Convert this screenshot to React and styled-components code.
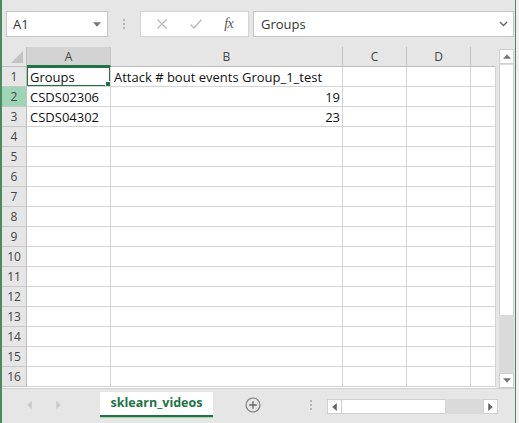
import React from "react";
import styled, { createGlobalStyle } from "styled-components";

const Global = createGlobalStyle`
  html, body { margin: 0; padding: 0; overflow: hidden; background: #e6e6e6; }
  * { box-sizing: border-box; }
`;

const FONT = `"Open Sans", "Noto Sans", sans-serif`;

const Window = styled.div`
  width: 519px;
  height: 423px;
  display: flex;
  flex-direction: column;
  background: #e6e6e6;
  border-left: 2px solid #4a8a5e;
  border-right: 3px solid #f0f0f0;
  position: relative;
  font-family: ${FONT};
  overflow: hidden;
  &::after {
    content: "";
    position: absolute;
    top: 0;
    bottom: 0;
    right: 0;
    width: 1px;
    background: #4a8a5e;
  }
`;

const FormulaBar = styled.div`
  height: 47px;
  display: flex;
  align-items: flex-start;
  padding: 11px 0 0 4px;
  flex: none;
`;

const NameBox = styled.div`
  width: 102px;
  height: 26px;
  background: #fff;
  border: 1px solid #c6c6c6;
  display: flex;
  align-items: center;
  justify-content: space-between;
  padding: 0 6px 0 6px;
  font-size: 13px;
  color: #333;
`;

const Dots = styled.div`
  width: 32px;
  height: 26px;
  display: flex;
  flex-direction: column;
  align-items: center;
  justify-content: center;
  gap: 2px;
  span {
    width: 2px;
    height: 2px;
    background: #b5b5b5;
  }
`;

const FxBox = styled.div`
  width: 109px;
  height: 26px;
  background: #fff;
  border: 1px solid #d4d4d4;
  display: flex;
  align-items: center;
  justify-content: space-around;
  padding: 0 4px;
  margin-right: 4px;
`;

const FxText = styled.span`
  font-family: "Liberation Serif", serif;
  font-style: italic;
  font-size: 14px;
  color: #555;
  letter-spacing: -0.5px;
`;

const FormulaInput = styled.div`
  width: 261px;
  height: 26px;
  background: #fff;
  border: 1px solid #c6c6c6;
  display: flex;
  align-items: center;
  justify-content: space-between;
  padding: 0 5px 0 7px;
  font-size: 13px;
  color: #333;
`;

const Main = styled.div`
  display: flex;
  height: 341px;
  flex: none;
`;

const Sheet = styled.div`
  width: 494px;
  display: grid;
  grid-template-columns: 25px 84px 232px 64px 64px 25px;
  grid-auto-rows: 20px;
  background: #fff;
  align-content: start;
  overflow: hidden;
`;

const Corner = styled.div`
  background: #e6e6e6;
  border-right: 1px solid #bdbdbd;
  border-bottom: 1px solid #bdbdbd;
  position: relative;
  &::after {
    content: "";
    position: absolute;
    right: 3px;
    bottom: 3px;
    width: 0;
    height: 0;
    border-left: 12px solid transparent;
    border-bottom: 12px solid #c3c3c3;
  }
`;

const ColHead = styled.div`
  background: ${(p) => (p.$active ? "#d3d3d3" : "#e6e6e6")};
  border-right: 1px solid ${(p) => (p.$last ? "transparent" : "#c4c4c4")};
  border-bottom: ${(p) => (p.$active ? "2px solid #217346" : "1px solid #bdbdbd")};
  display: flex;
  align-items: center;
  justify-content: center;
  font-size: 12px;
  color: #444;
  padding-top: ${(p) => (p.$active ? "1px" : "0")};
`;

const RowHead = styled.div`
  background: ${(p) => (p.$hover ? "#9fd5b7" : "#e6e6e6")};
  border-right: 1px solid #bdbdbd;
  border-bottom: 1px solid #c8c8c8;
  display: flex;
  align-items: center;
  justify-content: center;
  font-size: 12px;
  color: #444;
`;

const Cell = styled.div`
  border-right: 1px solid #d4d4d4;
  border-bottom: 1px solid #d4d4d4;
  display: flex;
  align-items: center;
  justify-content: ${(p) => (p.$num ? "flex-end" : "flex-start")};
  padding: 0 2px 0 3px;
  font-size: 13px;
  color: #111;
  white-space: nowrap;
  overflow: ${(p) => (p.$spill ? "visible" : "hidden")};
  position: relative;
  z-index: ${(p) => (p.$spill ? 1 : 0)};
`;

const Selection = styled.div`
  position: absolute;
  left: -1px;
  top: -1px;
  right: -1px;
  bottom: -1px;
  border: 2px solid #217346;
  pointer-events: none;
  z-index: 2;
  &::after {
    content: "";
    position: absolute;
    right: -4px;
    bottom: -4px;
    width: 6px;
    height: 6px;
    background: #217346;
    border: 1px solid #fff;
  }
`;

const VScroll = styled.div`
  width: 20px;
  display: flex;
  flex-direction: column;
  padding: 2px 2px 0 3px;
  background: #e6e6e6;
`;

const VTrack = styled.div`
  flex: 1;
  display: flex;
  flex-direction: column;
  background: #dadada;
`;

const ArrowBtn = styled.div`
  width: 15px;
  height: 15px;
  background: #fff;
  border: 1px solid #d0d0d0;
  display: flex;
  align-items: center;
  justify-content: center;
  flex: none;
`;

const VThumb = styled.div`
  height: 250px;
  background: #fff;
  border-left: 1px solid #d0d0d0;
  border-right: 1px solid #d0d0d0;
  margin-top: 1px;
`;

const Spacer = styled.div`
  flex: 1;
`;

const BottomBar = styled.div`
  flex: 1;
  display: flex;
  align-items: flex-start;
  background: #e6e6e6;
  border-top: 1px solid #d0d0d0;
  padding-top: 3px;
`;

const NavArea = styled.div`
  width: 98px;
  height: 26px;
  display: flex;
  align-items: center;
  padding-left: 24px;
  gap: 22px;
`;

const Tab = styled.div`
  width: 113px;
  height: 25px;
  background: #fff;
  border-bottom: 2px solid #217346;
  box-shadow: 0 1px 0 #a9d2b7;
  display: flex;
  align-items: center;
  justify-content: center;
  font-weight: 700;
  font-size: 12.5px;
  color: #217346;
  padding-bottom: 2px;
`;

const AddBtn = styled.div`
  width: 80px;
  height: 26px;
  display: flex;
  align-items: center;
  justify-content: center;
`;

const SmallDots = styled(Dots)`
  width: 14px;
  height: 26px;
  margin-left: 11px;
`;

const HScroll = styled.div`
  margin-left: 9px;
  margin-top: 7px;
  width: 171px;
  height: 15px;
  display: flex;
  background: #dadada;
`;

const HThumb = styled.div`
  width: 103px;
  background: #fff;
  border-top: 1px solid #d0d0d0;
  border-bottom: 1px solid #d0d0d0;
`;

const Tri = ({ dir, color = "#777", size = 7 }) => {
  const pts = {
    up: "0,5 7,5 3.5,1",
    down: "0,1 7,1 3.5,5",
    left: "5,0 5,7 1,3.5",
    right: "1,0 1,7 5,3.5",
  }[dir];
  const horiz = dir === "left" || dir === "right";
  const vb = horiz ? "0 0 6 7" : "0 0 7 6";
  return (
    <svg width={horiz ? size - 1 : size} height={horiz ? size : size - 1} viewBox={vb}>
      <polygon points={pts} fill={color} />
    </svg>
  );
};

const cols = ["A", "B", "C", "D", ""];
const data = {
  1: ["Groups", "Attack # bout events Group_1_test", "", "", ""],
  2: ["CSDS02306", "19", "", "", ""],
  3: ["CSDS04302", "23", "", "", ""],
};

export default function App() {
  const rows = Array.from({ length: 16 }, (_, i) => i + 1);
  return (
    <>
      <Global />
      <Window>
        <FormulaBar>
          <NameBox>
            <span>A1</span>
            <Tri dir="down" color="#777" size={8} />
          </NameBox>
          <Dots>
            <span />
            <span />
            <span />
          </Dots>
          <FxBox>
            <svg width="12" height="12" viewBox="0 0 12 12">
              <path d="M1.5 1.5 L10.5 10.5 M10.5 1.5 L1.5 10.5" stroke="#b8b8b8" strokeWidth="1.3" fill="none" />
            </svg>
            <svg width="14" height="12" viewBox="0 0 14 12">
              <path d="M1.5 6.5 L5 10 L12.5 1.5" stroke="#b8b8b8" strokeWidth="1.3" fill="none" />
            </svg>
            <FxText>fx</FxText>
          </FxBox>
          <FormulaInput>
            <span>Groups</span>
            <svg width="9" height="6" viewBox="0 0 9 6">
              <path d="M1 1 L4.5 4.5 L8 1" stroke="#666" strokeWidth="1.4" fill="none" />
            </svg>
          </FormulaInput>
        </FormulaBar>
        <Main>
          <Sheet>
            <Corner />
            {cols.map((c, i) => (
              <ColHead key={i} $active={c === "A"} $last={i === cols.length - 1}>
                {c}
              </ColHead>
            ))}
            {rows.map((r) => (
              <React.Fragment key={r}>
                <RowHead $hover={r === 2}>{r}</RowHead>
                {cols.map((c, ci) => {
                  const v = data[r] ? data[r][ci] : "";
                  const isNum = v !== "" && !isNaN(Number(v));
                  return (
                    <Cell key={ci} $num={isNum} $spill={r === 1 && ci === 1}>
                      {v}
                      {r === 1 && ci === 0 && <Selection />}
                    </Cell>
                  );
                })}
              </React.Fragment>
            ))}
          </Sheet>
          <VScroll>
            <VTrack>
              <ArrowBtn>
                <Tri dir="up" color="#777" size={8} />
              </ArrowBtn>
              <VThumb />
              <Spacer />
              <ArrowBtn>
                <Tri dir="down" color="#777" size={8} />
              </ArrowBtn>
            </VTrack>
          </VScroll>
        </Main>
        <BottomBar>
          <NavArea>
            <Tri dir="left" color="#c8c8c8" size={8} />
            <Tri dir="right" color="#c8c8c8" size={8} />
          </NavArea>
          <Tab>sklearn_videos</Tab>
          <AddBtn>
            <svg width="16" height="16" viewBox="0 0 16 16">
              <circle cx="8" cy="8" r="7" stroke="#777" strokeWidth="1.1" fill="none" />
              <path d="M8 4.2 V11.8 M4.2 8 H11.8" stroke="#666" strokeWidth="1.3" />
            </svg>
          </AddBtn>
          <SmallDots>
            <span />
            <span />
            <span />
          </SmallDots>
          <HScroll>
            <ArrowBtn>
              <Tri dir="left" color="#666" size={8} />
            </ArrowBtn>
            <HThumb />
            <Spacer />
            <ArrowBtn>
              <Tri dir="right" color="#666" size={8} />
            </ArrowBtn>
          </HScroll>
        </BottomBar>
      </Window>
    </>
  );
}
